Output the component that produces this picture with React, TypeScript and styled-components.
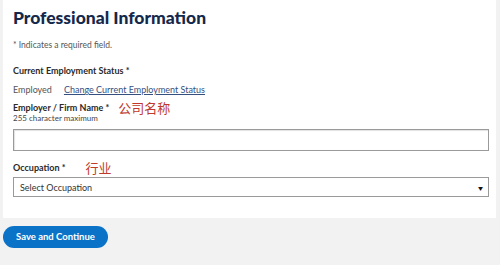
import React from "react";
import styled, {createGlobalStyle} from "styled-components";

const GlobalStyle = createGlobalStyle`
  body {
    margin: 0;
    background: #f2f2f2;
    font-family: Lato, "Noto Sans", "Noto Sans CJK SC", sans-serif;
  }
`;

const Card = styled.section`
  margin-left: 3px;
  width: 493px;
  height: 218px;
  box-sizing: border-box;
  background: #ffffff;
  padding: 7px 8px 0 10px;
`;

const Title = styled.h1`
  margin: 0;
  font-size: 17.5px;
  line-height: 22px;
  font-weight: 900;
  color: #14284b;
`;

const Note = styled.p`
  margin: 11px 0 0;
  font-size: 8.5px;
  color: #555;
`;

const Label = styled.div<{top?: number}>`
  display: flex;
  align-items: center;
  margin-top: ${(p) => p.top ?? 0}px;
  font-size: 9px;
  font-weight: 700;
  color: #2a2a2a;
  line-height: 12px;
`;

const Hint = styled.span<{gap: number}>`
  margin-left: ${(p) => p.gap}px;
  color: #c0392b;
  font-size: 13px;
  font-weight: 400;
  font-family: "Noto Sans CJK SC", sans-serif;
`;

const StatusRow = styled.div`
  display: flex;
  gap: 12px;
  margin-top: 7px;
  font-size: 9px;
  color: #555;
`;

const Link = styled.a`
  color: #35507f;
  text-decoration: underline;
`;

const Small = styled.div`
  font-size: 8px;
  color: #444;
  line-height: 9px;
`;

const Field = styled.div`
  margin-top: 6px;
  width: 476px;
  height: 22px;
  box-sizing: border-box;
  border: 1px solid #9a9a9a;
  box-shadow: inset 1px 1px 1px rgba(0, 0, 0, 0.12);
`;

const Select = styled.div`
  margin-top: 3px;
  width: 476px;
  height: 20px;
  box-sizing: border-box;
  border: 1px solid #9a9a9a;
  display: flex;
  align-items: center;
  justify-content: space-between;
  padding: 0 5px 0 6px;
  font-size: 9px;
  color: #333;
`;

const Arrow = styled.span`
  font-size: 5px;
  color: #111;
`;

const Footer = styled.div`
  padding: 6px 0 0 3px;
`;

const Button = styled.button`
  width: 105px;
  height: 22px;
  border: none;
  border-radius: 11px;
  background: #0a72c7;
  color: #fff;
  font-family: Lato, sans-serif;
  font-size: 9.5px;
  font-weight: 700;
  padding: 0;
`;

export default function App() {
  return (
    <>
      <GlobalStyle/>
      <Card>
        <Title>Professional Information</Title>
        <Note>* Indicates a required field.</Note>
        <Label top={15}>Current Employment Status *</Label>
        <StatusRow>
          <span>Employed</span>
          <Link>Change Current Employment Status</Link>
        </StatusRow>
        <Label top={7}>
          <span>Employer / Firm Name *</span>
          <Hint gap={9}>公司名称</Hint>
        </Label>
        <Small>255 character maximum</Small>
        <Field/>
        <Label top={11}>
          <span>Occupation *</span>
          <Hint gap={20}>行业</Hint>
        </Label>
        <Select>
          <span>Select Occupation</span>
          <Arrow>▼</Arrow>
        </Select>
      </Card>
      <Footer>
        <Button>Save and Continue</Button>
      </Footer>
    </>
  );
}
